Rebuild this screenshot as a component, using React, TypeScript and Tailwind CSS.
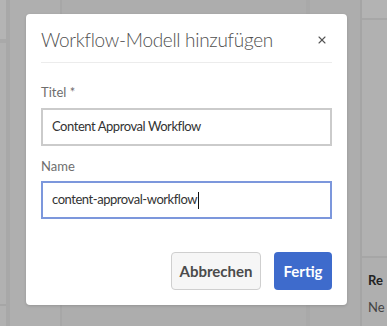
import { X } from "lucide-react";

function Backdrop() {
  return (
    <div className="flex h-full w-full bg-[#aeaeae]">
      <div className="flex w-[10px] shrink-0 flex-col border-r-4 border-[#a8a8a8] bg-[#b1b1b1]">
        <div className="h-[43px] border-b-4 border-[#a9a9a9] bg-[#b4b4b4]" />
        <div className="flex-1" />
        <div className="h-[22px] border-t-2 border-[#a6a6a6]" />
      </div>
      <div className="w-[52px] shrink-0 border-r-2 border-[#a7a7a7] bg-[#afafaf]" />
      <div className="w-[248px] shrink-0 border-r-4 border-[#a9a9a9] bg-[#adadad]" />
      <div className="w-[52px] shrink-0 border-r-2 border-[#a5a5a5] bg-[#adadad]" />
      <div className="flex min-w-0 flex-1 flex-col bg-[#afafaf]">
        <div className="h-[20px] border-b-2 border-[#a7a7a7] bg-[#b3b3b3]" />
        <div className="h-[238px] border-b-2 border-[#a6a6a6] bg-[#b1b1b1]" />
        <div className="flex flex-col gap-[14px] pl-[6px] pt-[16px] text-[13px] leading-none text-[#222]">
          <span className="font-bold">Re</span>
          <span className="text-[#444]">Ne</span>
        </div>
      </div>
    </div>
  );
}

export default function App() {
  return (
    <div className="relative h-[326px] w-[387px] overflow-hidden font-['Lato',sans-serif]">
      <Backdrop />

      <div className="absolute left-[26px] top-[14px] flex h-[291px] w-[321px] flex-col rounded-[4px] bg-white px-[15px] shadow-[0_1px_3px_rgba(0,0,0,0.15)]">
        <div className="flex h-[49px] items-center justify-between border-b border-[#ececec] pt-[4px]">
          <h1 className="text-[19px] font-light tracking-[-0.3px] text-[#505050]">Workflow-Modell hinzufügen</h1>
          <button className="mr-[4px] text-[#555]">
            <X size={12} strokeWidth={2.2} />
          </button>
        </div>

        <label className="mt-[23px] text-[13px] leading-none text-[#6e6e6e]">Titel *</label>
        <div className="mt-[9px] flex h-[38px] items-center border-2 border-[#cbcbcb] px-[9px] text-[13px] tracking-[-0.45px] text-[#333]">
          Content Approval Workflow
        </div>

        <label className="mt-[14px] text-[13px] leading-none text-[#6e6e6e]">Name</label>
        <div className="mt-[8px] flex h-[38px] items-center border-2 border-[#7c97dc] px-[9px] text-[13px] tracking-[-0.45px] text-[#333]">
          content-approval-workflow
          <span className="ml-[1px] h-[17px] w-[1px] bg-[#111]" />
        </div>

        <div className="mt-[33px] flex justify-end gap-[13px]">
          <button className="h-[38px] w-[90px] rounded-[4px] border border-[#cfcfcf] bg-[#f6f6f6] text-[15px] font-bold text-[#4b4b4b]">
            Abbrechen
          </button>
          <button className="h-[38px] w-[58px] rounded-[4px] bg-[#3e6bcc] text-[15px] font-bold text-white">
            Fertig
          </button>
        </div>
      </div>
    </div>
  );
}
